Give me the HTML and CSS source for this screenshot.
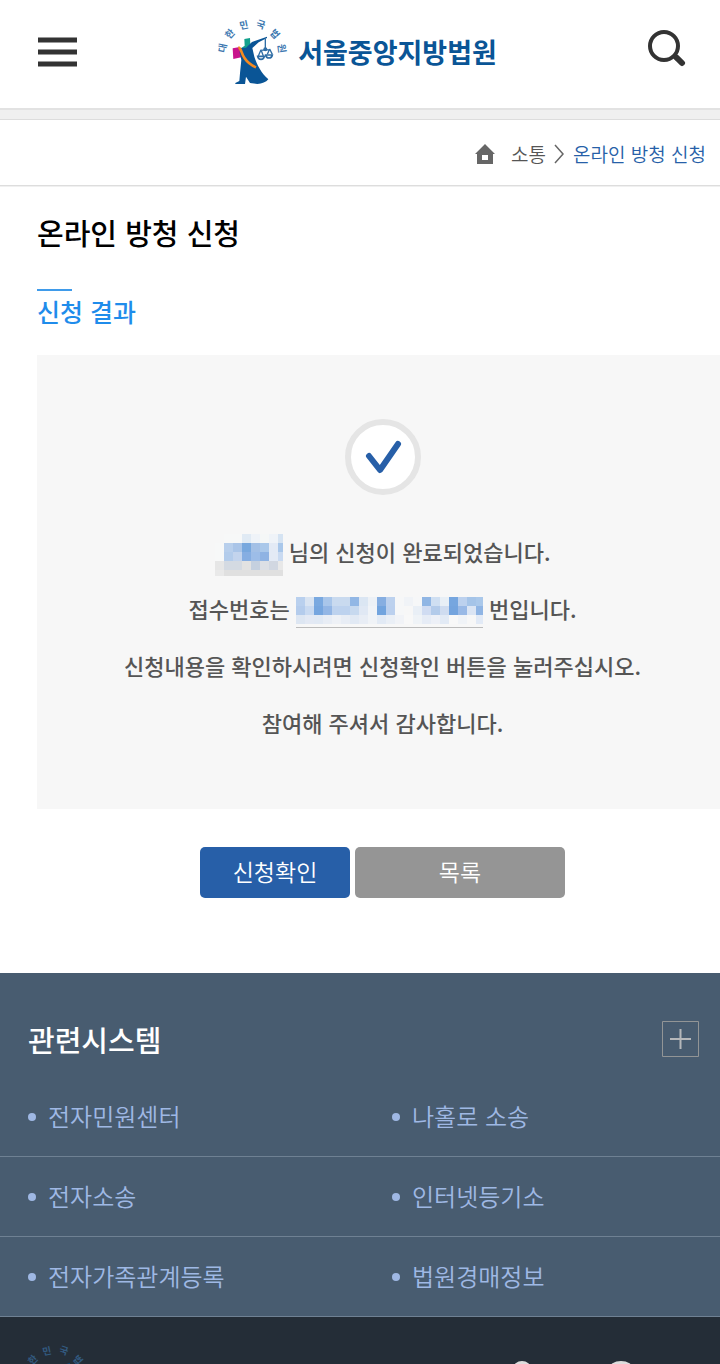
FILE: index.html
```html
<!DOCTYPE html>
<html lang="ko">
<head>
    <meta charset="UTF-8">
    <meta name="viewport" content="width=device-width, initial-scale=1.0">
    <title>서울중앙지방법원</title>
    <link rel="stylesheet" href="styles.css">
</head>
<body>
    <header class="header">
        <button class="icon-btn" type="button" aria-label="메뉴">
            <svg width="39" height="32" viewBox="0 0 39 32">
                <path stroke="#333" stroke-width="5" d="M0 4h39M0 16h39M0 28h39"/>
            </svg>
        </button>
        <a class="logo" href="#">
            <svg class="emblem" width="76" height="68" viewBox="24 24 228 204">
                <g id="emblem">
                    <g class="emblem-text" font-size="29" text-anchor="middle">
                        <text transform="translate(47 114) rotate(-78)" y="10">대</text>
                        <text transform="translate(69 72) rotate(-48)" y="10">한</text>
                        <text transform="translate(111 46) rotate(-12)" y="10">민</text>
                        <text transform="translate(161 44) rotate(18)" y="10">국</text>
                        <text transform="translate(203 72) rotate(48)" y="10">법</text>
                        <text transform="translate(224 115) rotate(82)" y="10">원</text>
                    </g>
                    <path fill="#12a08c" d="M112 87l17-3 1 20-8 8-3 14-14-2-2-10 10-7z"/>
                    <path fill="#c9148c" d="M77 115l21-4 8 30-27 6z"/>
                    <path fill="#0a5596" d="M180 80l-45 16-18 17-17 1-2 14 5 22-4 40-2 23-12 6v3h29l3-22 12 19 22 3c14-1 26-5 33-14-22-20-34-44-42-68l-6-26 19-17 25-13z"/>
                    <path fill="none" stroke="#f58a20" stroke-width="8" d="M94 113c9 0 8 17 19 32 8 12 20 21 34 27"/>
                    <path fill="none" stroke="#2f6da5" stroke-width="4" d="M175 86v33M160 121l30-2M162 119l-8 19M162 119l7 19M188 117l-7 16M188 117l8 16"/>
                    <path fill="none" stroke="#2f6da5" stroke-width="5" d="M152 139c2 12 18 12 20 0zM176 135c2 12 18 12 20 0z"/>
                    <circle cx="175" cy="118" r="6" fill="#2f6da5"/>
                </g>
            </svg>
            <span>서울중앙지방법원</span>
        </a>
        <button class="icon-btn search" type="button" aria-label="검색">
            <svg width="39" height="38" viewBox="0 0 39 38">
                <circle cx="17" cy="17" r="14" fill="none" stroke="#333" stroke-width="4"/>
                <path stroke="#333" stroke-width="4" d="M26 26l4 4"/>
                <path stroke="#333" stroke-width="6" stroke-linecap="round" d="M30 29l5 5"/>
            </svg>
        </button>
    </header>

    <nav class="breadcrumb">
        <a href="#" class="home" aria-label="홈">
            <svg width="20" height="20" viewBox="0 0 20 20">
                <path fill="#666" fill-rule="evenodd" d="M10 0l10 10h-2v10H2V10H0zM7 11v5h6v-5z"/>
            </svg>
        </a>
        <a href="#">소통</a>
        <svg class="arrow" width="11" height="20" viewBox="0 0 11 20">
            <path fill="none" stroke="#666" stroke-width="1.5" d="M1 1l8 9-8 9"/>
        </svg>
        <a href="#" class="current">온라인 방청 신청</a>
    </nav>

    <main class="content">
        <h1>온라인 방청 신청</h1>
        <h2>신청 결과</h2>

        <section class="result">
            <svg class="check" width="76" height="76" viewBox="0 0 76 76">
                <circle cx="38" cy="38" r="35" fill="#fff" stroke="#e5e5e5" stroke-width="6"/>
                <path fill="none" stroke="#275fa8" stroke-width="6" stroke-linecap="round" stroke-linejoin="round" d="M24 37l11 14 18-26"/>
            </svg>
            <p><svg class="mask" id="maskName" width="68" height="42"></svg> 님의 신청이 완료되었습니다.</p>
            <p>접수번호는 <span class="number"><svg class="mask" id="maskNumber" width="187" height="27"></svg></span> 번입니다.</p>
            <p>신청내용을 확인하시려면 신청확인 버튼을 눌러주십시오.</p>
            <p>참여해 주셔서 감사합니다.</p>
        </section>

        <div class="buttons">
            <button class="btn confirm" type="button">신청확인</button>
            <button class="btn list" type="button">목록</button>
        </div>
    </main>

    <section class="systems">
        <div class="systems-head">
            <h3>관련시스템</h3>
            <button class="icon-btn" type="button" aria-label="더보기">
                <svg width="37" height="36" viewBox="0 0 37 36">
                    <path fill="none" stroke="#929596" d="M.5.5h36v35H.5z"/>
                    <path stroke="#b5b7ba" stroke-width="2" d="M8 18h21M18.5 8v20"/>
                </svg>
            </button>
        </div>
        <ul class="system-list">
            <li><a href="#">전자민원센터</a></li>
            <li><a href="#">나홀로 소송</a></li>
            <li><a href="#">전자소송</a></li>
            <li><a href="#">인터넷등기소</a></li>
            <li><a href="#">전자가족관계등록</a></li>
            <li><a href="#">법원경매정보</a></li>
        </ul>
    </section>

    <footer class="footer">
        <svg class="emblem" width="76" height="68" viewBox="24 24 228 204"><use href="#emblem"/></svg>
        <svg class="marks" width="120" height="20" viewBox="0 0 120 20">
            <ellipse cx="9" cy="8" rx="9" ry="8" fill="#ddd"/>
            <ellipse cx="108" cy="8" rx="12" ry="8" fill="#ddd"/>
        </svg>
    </footer>

    <script>
        // Colour cells that hide personal details, one string per row
        const nameCells = [
            "f7f7f7 f7f8f8 f7f8f8 e0eaf4 eff3f8 f5f7f7 eff3f8 d5e3f2",
            "f7f8f8 b8cfec aac5e8 78a8de a3c0e6 aac8ea e3eaf5 a9c7ea",
            "f7f8f8 b3cceb c3d4ed 86aee2 9dbde8 8fb3e3 e3eaf5 c9daf1",
            "e6e6e6 d4dae2 d4dae2 e2e2e2 c5d0df dcdfe5 d1d7e1 e8e8e8",
            "e9e9e9 e0e0e0 e0e0e0 e0e0e0 e0e0e0 e0e0e0 e0e0e0 e0e0e0"
        ];
        const numberCells = [
            "b9d0ee d9e4f2 7aa9e0 a9c6ea c9daef c9daef 92b7e5 dbe6f3 edf1f6 86aee1 bcd1ee f6f7f8 f0f3f7 f6f7f8 90b6e4 cfdff2 e8eff6 76a6df bcd1ee a5c4e8 aac8ea",
            "b4ccec c9daf1 76a6df 93b6e5 bdd2ee bdd2ee c7d9ef e0e8f4 f0f3f7 72a4de bbd0ee f6f7f8 f7f7f7 e9eff6 d0dcf2 b3cbea cfdcf0 74a4de 99b9e6 dbe5f4 90b5e4",
            "dde6f2 e3e9f4 e1e9f4 e8edf5 eef1f6 e8edf5 e1e9f4 e8edf5 f0f3f7 e2eaf5 eaeff6 f1f3f7 f8f8f8 eff3f7 e6ecf6 edf0f7 e2eaf5 f8f8f8 f0f3f7 f7f7f7 e2eaf6"
        ];

        function drawMask(id, rows) {
            const svg = document.getElementById(id);
            rows.forEach((row, y) => {
                row.split(" ").forEach((color, x) => {
                    const cell = document.createElementNS("http://www.w3.org/2000/svg", "rect");
                    cell.setAttribute("x", x * 9);
                    cell.setAttribute("y", y * 9);
                    cell.setAttribute("width", 9);
                    cell.setAttribute("height", 9);
                    cell.setAttribute("fill", "#" + color);
                    svg.appendChild(cell);
                });
            });
        }

        drawMask("maskName", nameCells);
        drawMask("maskNumber", numberCells);
    </script>
</body>
</html>
```

FILE: styles.css
```css
/* General Styles */
* {
    box-sizing: border-box;
}

body {
    font-family: 'Noto Sans CJK KR', sans-serif;
    margin: 0;
    background: #fff;
    color: #555;
    overflow-x: hidden;
}

a {
    color: inherit;
    text-decoration: none;
}

h1, h2, h3, p, ul {
    margin: 0;
    padding: 0;
}

svg {
    display: block;
}

.icon-btn {
    padding: 0;
    border: none;
    background: none;
    cursor: pointer;
}

/* Header */
.header {
    display: flex;
    justify-content: space-between;
    align-items: center;
    height: 110px;
    padding: 0 34px 4px 38px;
    border-bottom: 2px solid #e2e2e2;
}

.search {
    padding-bottom: 8px;
}

.logo {
    display: flex;
    align-items: center;
    gap: 7px;
    margin-right: 12px;
    font-size: 27px;
    font-weight: 700;
    line-height: 40px;
    color: #0a5596;
}

.emblem {
    overflow: visible;
}

.emblem-text {
    fill: #3d78b0;
    font-weight: 700;
}

/* Breadcrumb */
.breadcrumb {
    display: flex;
    justify-content: flex-end;
    align-items: center;
    padding: 20px 14px 16px;
    border-top: 9px solid #f0f0f0;
    border-bottom: 1px solid #ddd;
    box-shadow: inset 0 1px #ddd, 0 1px #f0f0f0;
    font-size: 19px;
    font-weight: 350;
    line-height: 30px;
}

.home {
    margin-right: 16px;
}

.arrow {
    margin: 0 8px;
}

.current {
    color: #275fa8;
}

/* Content */
.content {
    margin-right: -8px;
    padding: 24px 0 75px 37px;
}

h1 {
    font-size: 29px;
    font-weight: 500;
    line-height: 44px;
    color: #000;
}

h2 {
    margin: 35px 0 24px;
    font-size: 25px;
    font-weight: 500;
    line-height: 40px;
    color: #1f8ceb;
}

h2::before {
    content: "";
    display: block;
    width: 35px;
    height: 2px;
    background: #3f9bea;
}

.result {
    padding: 64px 0 58px;
    background: #f7f7f7;
    text-align: center;
    font-size: 22px;
    font-weight: 500;
    line-height: 57px;
}

.check {
    margin: 0 auto 28px;
}

.mask {
    display: inline-block;
    vertical-align: middle;
}

.number {
    display: inline-block;
    padding-bottom: 3px;
    border-bottom: 1px solid #bbb;
    line-height: 0;
    vertical-align: middle;
}

.buttons {
    display: flex;
    justify-content: center;
    gap: 5px;
    margin-top: 38px;
}

.btn {
    height: 51px;
    padding: 0 32px 4px;
    border: none;
    border-radius: 5px;
    font-family: inherit;
    font-size: 23px;
    font-weight: 350;
    color: #fff;
    cursor: pointer;
}

.confirm {
    min-width: 150px;
    background: #275fa8;
}

.list {
    min-width: 210px;
    background: #959595;
}

/* Related systems */
.systems {
    background: #485c70;
}

.systems-head {
    display: flex;
    justify-content: space-between;
    align-items: center;
    padding: 48px 21px 20px 28px;
}

h3 {
    font-size: 29px;
    font-weight: 500;
    line-height: 36px;
    color: #fff;
}

.system-list {
    display: grid;
    grid-template-columns: 1fr 1fr;
    margin-right: -8px;
    list-style: none;
    font-size: 24px;
    font-weight: 350;
    line-height: 77px;
    color: #9fb8e4;
}

.system-list li {
    display: flex;
    align-items: center;
    gap: 12px;
    padding-left: 28px;
    border-bottom: 1px solid #6f8193;
}

.system-list a {
    padding-bottom: 2px;
}

.system-list li::before {
    content: "";
    width: 8px;
    height: 8px;
    border-radius: 50%;
    background: #9fb8e4;
}

/* Footer */
.footer {
    display: flex;
    justify-content: space-between;
    height: 47px;
    padding: 27px 87px 0 18px;
    background: #242d37;
    overflow: hidden;
}

.footer .emblem {
    opacity: 0.6;
}

.marks {
    margin-top: 17px;
}
```
